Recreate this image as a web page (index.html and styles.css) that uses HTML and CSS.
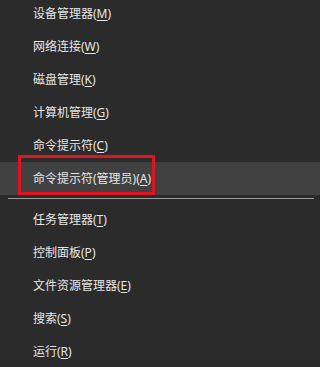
FILE: index.html
```html
<!DOCTYPE html>
<html lang="zh-CN">
<head>
<meta charset="utf-8">
<title>菜单</title>
<link rel="stylesheet" href="styles.css">
</head>
<body>
<div class="menu">
  <div class="item">设备管理器(<u>M</u>)</div>
  <div class="item">网络连接(<u>W</u>)</div>
  <div class="item">磁盘管理(<u>K</u>)</div>
  <div class="item">计算机管理(<u>G</u>)</div>
  <div class="item">命令提示符(<u>C</u>)</div>
  <div class="item active">命令提示符(管理员)(<u>A</u>)<span class="mark"></span></div>
  <div class="sep"></div>
  <div class="item">任务管理器(<u>T</u>)</div>
  <div class="item">控制面板(<u>P</u>)</div>
  <div class="item">文件资源管理器(<u>E</u>)</div>
  <div class="item">搜索(<u>S</u>)</div>
  <div class="item">运行(<u>R</u>)</div>
</div>
</body>
</html>
```
FILE: styles.css
```css
html, body {
  margin: 0;
  padding: 0;
  background: #2b2b2b;
  overflow: hidden;
}
.menu {
  margin-top: -3.5px;
  display: flex;
  flex-direction: column;
  font-family: "Noto Sans", "Noto Sans CJK SC", sans-serif;
  font-size: 12px;
  color: #e6e6e6;
}
.item {
  height: 33px;
  line-height: 33px;
  padding-left: 33px;
  white-space: nowrap;
  position: relative;
}
.item u {
  text-decoration-thickness: 1px;
  text-underline-offset: 2px;
}
.item.active {
  background: #414141;
}
.mark {
  position: absolute;
  left: 18px;
  top: -7px;
  width: 131px;
  height: 34px;
  border: 3px solid #e0141e;
  pointer-events: none;
}
.sep {
  height: 8px;
  display: flex;
  align-items: center;
  padding: 0 6px 0 8px;
}
.sep::before {
  content: "";
  flex: 1;
  height: 1px;
  background: #9a9a9a;
}
```
